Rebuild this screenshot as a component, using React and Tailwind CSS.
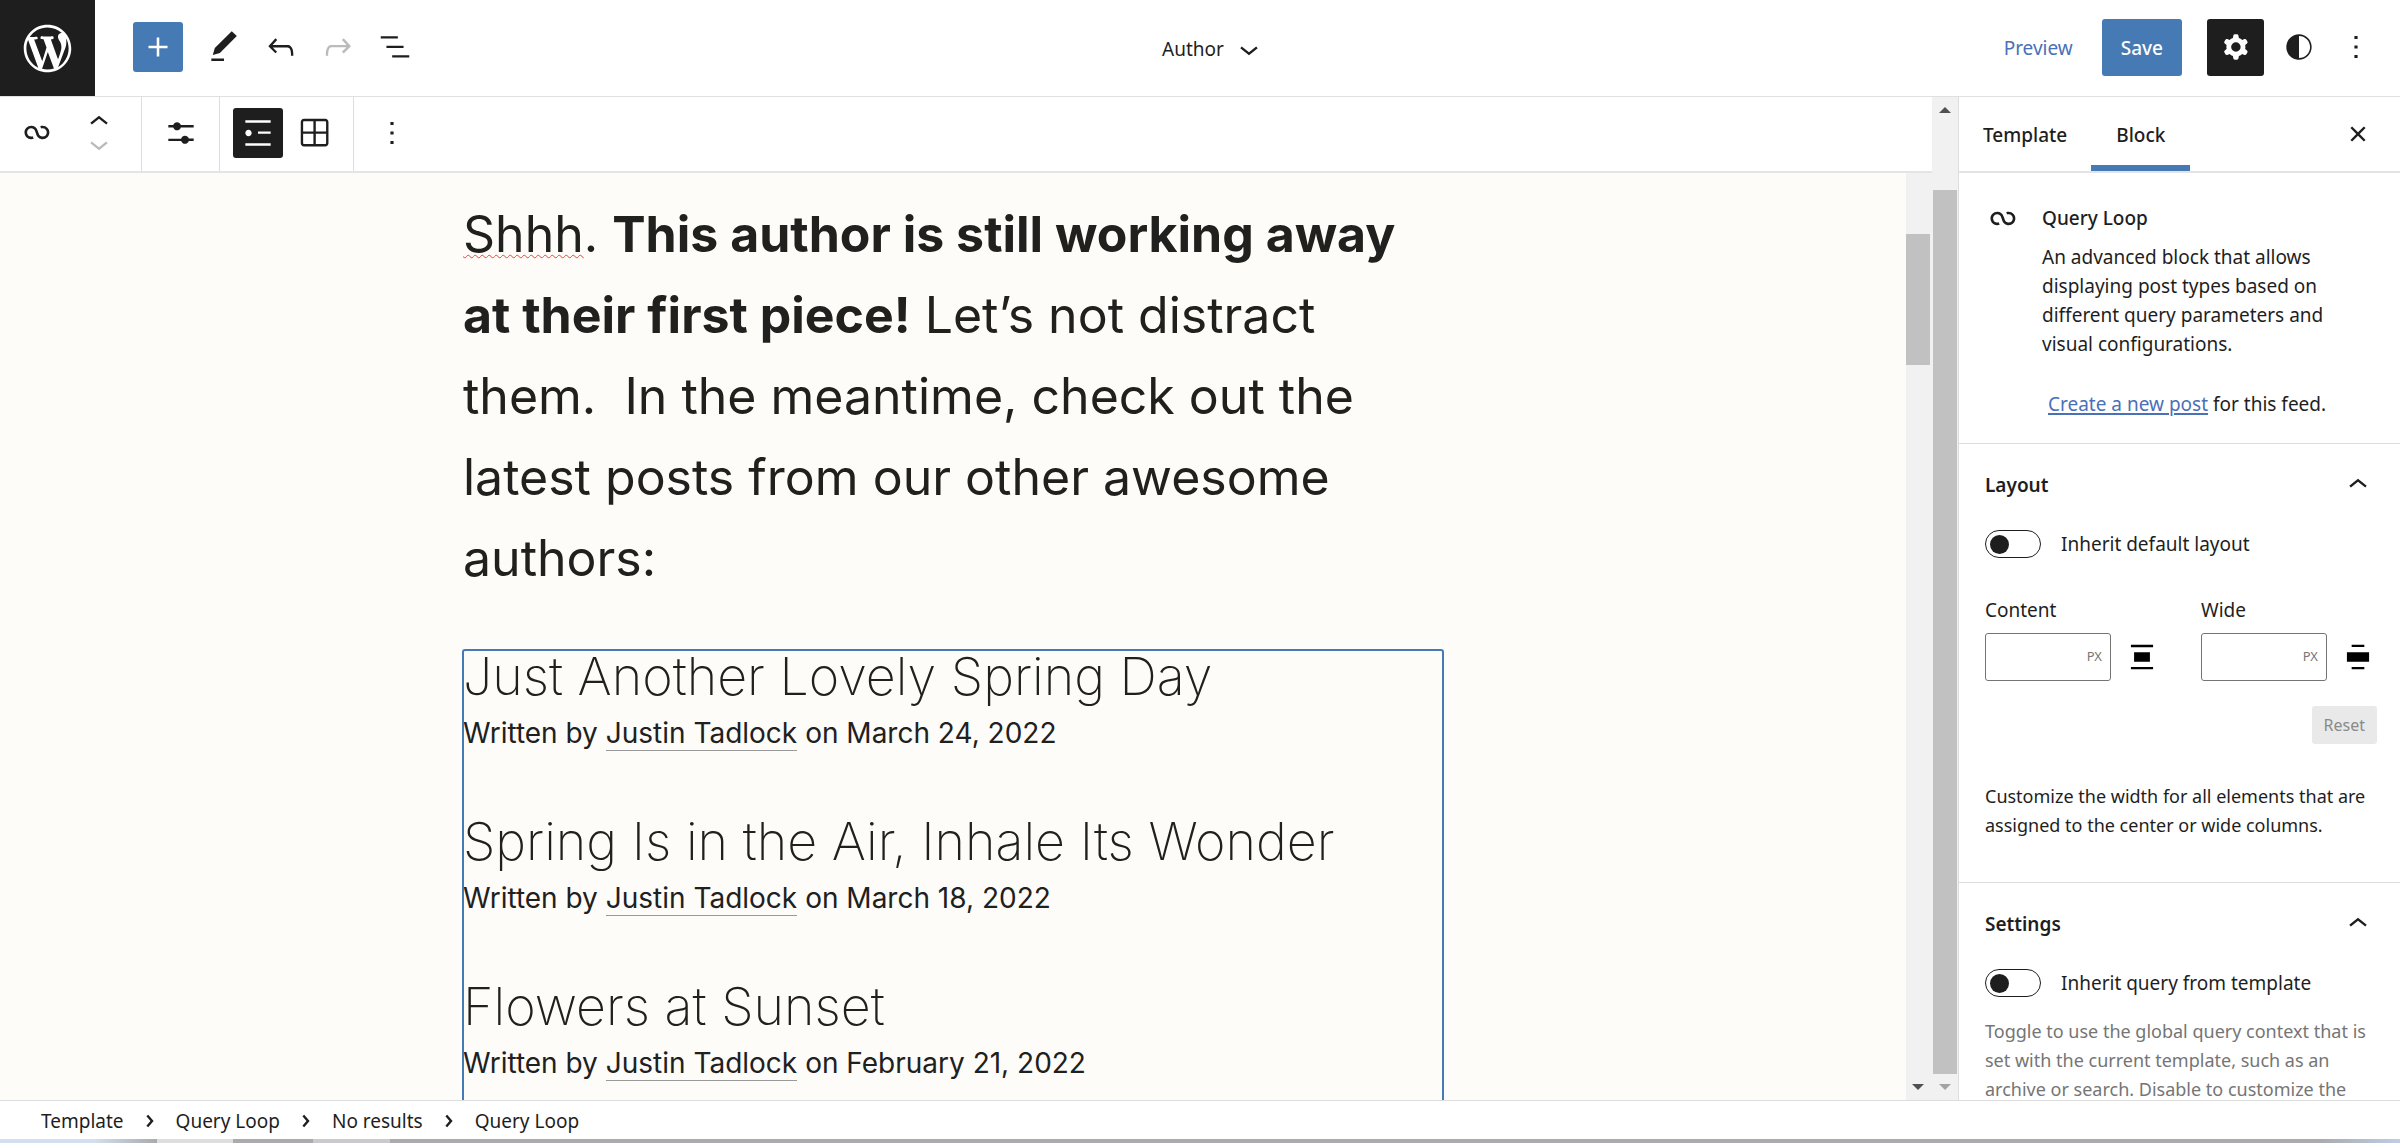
import { useState } from 'react';
import clsx from 'clsx';

const icons = {
  plus: 'M18 11.2h-5.2V6h-1.6v5.2H6v1.6h5.2V18h1.6v-5.2H18z',
  edit: 'M20.1 5.1L16.9 2 6.2 12.7l-1.3 4.4 4.5-1.3L20.1 5.1zM4 20.8h8v-1.5H4v1.5z',
  undo: 'M18.3 11.7c-.6-.6-1.4-.9-2.3-.9H6.7l2.9-3.3-1.1-1-4.5 5L8.5 16l1-1-2.7-2.7H16c.5 0 .9.2 1.3.5 1 1 1 3.4 1 4.5v.3h1.5v-.2c0-1.5 0-4.3-1.5-5.7z',
  redo: 'M15.6 6.5l-1.1 1 2.9 3.3H8c-.9 0-1.7.3-2.3.9-1.4 1.5-1.4 4.2-1.4 5.6v.2h1.5v-.3c0-1.1 0-3.5 1-4.5.3-.3.7-.5 1.3-.5h9.2L14.5 15l1.1 1.1 4.6-4.6-4.6-5z',
  listView: 'M13.8 5.2H3v1.5h10.8V5.2zm-3.6 12v1.5H21v-1.5H10.2zm7.2-6H6.6v1.5h10.8v-1.5z',
  loop: 'M18.1823 11.6392C18.1823 13.0804 17.0139 14.2487 15.5727 14.2487C14.3579 14.2487 13.335 13.4179 13.0453 12.2922L13.0377 12.2625L13.0278 12.2335L12.3985 10.377L12.3942 10.3785C11.8571 8.64997 10.246 7.39405 8.33961 7.39405C5.99509 7.39405 4.09448 9.29465 4.09448 11.6392C4.09448 13.9837 5.99509 15.8843 8.33961 15.8843C8.88499 15.8843 9.40822 15.781 9.88943 15.5923L9.29212 14.0697C8.99812 14.1848 8.67729 14.2487 8.33961 14.2487C6.89838 14.2487 5.73003 13.0804 5.73003 11.6392C5.73003 10.1979 6.89838 9.02959 8.33961 9.02959C9.55444 9.02959 10.5773 9.86046 10.867 10.9862L10.8772 10.9836L11.4695 12.7311C11.9515 14.546 13.6048 15.8843 15.5727 15.8843C17.9172 15.8843 19.8178 13.9837 19.8178 11.6392C19.8178 9.29465 17.9172 7.39404 15.5727 7.39404C15.0287 7.39404 14.5066 7.4968 14.0264 7.6847L14.6223 9.20781C14.9158 9.093 15.2358 9.02959 15.5727 9.02959C17.0139 9.02959 18.1823 10.1979 18.1823 11.6392Z',
  chevronUp: 'M6.5 12.4L12 8l5.5 4.4-.9 1.2L12 10l-4.5 3.6-1-1.2z',
  chevronDown: 'M17.5 11.6L12 16l-5.5-4.4.9-1.2L12 14l4.5-3.6 1 1.2z',
  chevronRight: 'M10.8622 8.04053L14.2805 12.0286L10.8622 16.0167L9.72327 15.0405L12.3049 12.0286L9.72327 9.01672L10.8622 8.04053Z',
  sliders: 'M14.5 13.8c-1.1 0-2.1.7-2.4 1.8H4V17h8.1c.3 1 1.3 1.8 2.4 1.8s2.1-.7 2.4-1.8H20v-1.5h-3.1c-.3-1-1.3-1.7-2.4-1.7zM11.9 7c-.3-1-1.3-1.8-2.4-1.8S7.4 6 7.1 7H4v1.5h3.1c.3 1 1.3 1.8 2.4 1.8s2.1-.7 2.4-1.8H20V7h-8.1z',
  list: 'M4 4v1.5h16V4H4zm8 8.5h8V11h-8v1.5zM4 20h16v-1.5H4V20zm4-8c0-1.1-.9-2-2-2s-2 .9-2 2 .9 2 2 2 2-.9 2-2z',
  grid: 'm3 5c0-1.10457.89543-2 2-2h13.5c1.1046 0 2 .89543 2 2v13.5c0 1.1046-.8954 2-2 2h-13.5c-1.10457 0-2-.8954-2-2zm2-.5h6v6.5h-6.5v-6c0-.27614.22386-.5.5-.5zm-.5 8v6c0 .2761.22386.5.5.5h6v-6.5zm8 0v6.5h6c.2761 0 .5-.2239.5-.5v-6zm0-8v6.5h6.5v-6c0-.27614-.2239-.5-.5-.5z',
  more: 'M13 19h-2v-2h2v2zm0-6h-2v-2h2v2zm0-6h-2V5h2v2z',
  cog: 'M10.289 4.836A1 1 0 0111.275 4h1.306a1 1 0 01.987.836l.244 1.466c.787.26 1.503.679 2.108 1.218l1.393-.522a1 1 0 011.216.437l.653 1.13a1 1 0 01-.23 1.273l-1.148.944a6.025 6.025 0 010 2.435l1.149.946a1 1 0 01.23 1.272l-.653 1.13a1 1 0 01-1.216.437l-1.394-.522c-.605.54-1.32.958-2.108 1.218l-.244 1.466a1 1 0 01-.987.836h-1.306a1 1 0 01-.986-.836l-.244-1.466a5.995 5.995 0 01-2.108-1.218l-1.394.522a1 1 0 01-1.217-.436l-.653-1.131a1 1 0 01.23-1.272l1.149-.946a6.026 6.026 0 010-2.435l-1.148-.944a1 1 0 01-.23-1.272l.653-1.131a1 1 0 011.217-.437l1.393.522a5.994 5.994 0 012.108-1.218l.244-1.466zM14.929 12a3 3 0 11-6 0 3 3 0 016 0z',
  styles: 'M12 4c-4.4 0-8 3.6-8 8v.1c0 4.1 3.2 7.5 7.2 7.9h.8c4.4 0 8-3.6 8-8s-3.6-8-8-8zm0 15V5c3.9 0 7 3.1 7 7s-3.1 7-7 7z',
  close: 'M12 13.06l3.712 3.713 1.061-1.06L13.061 12l3.712-3.712-1.06-1.06L12 10.938 8.288 7.227l-1.061 1.06L10.939 12l-3.712 3.712 1.06 1.061L12 13.061z',
  center: 'M7 9v6h10V9H7zM5 19.8h14v-1.5H5v1.5zM5 4.3v1.5h14V4.3H5z',
  wide: 'M5 9v6h14V9H5zm11-4.8H8v1.5h8V4.2zM8 19.8h8v-1.5H8v1.5z',
};

function Icon({ name, className }) {
  return (
    <svg viewBox="0 0 24 24" fill="currentColor" fillRule="evenodd" aria-hidden="true" className={clsx('size-[38px] shrink-0', className)}>
      <path d={icons[name]} />
    </svg>
  );
}

function IconButton({ icon, label, className, ...props }) {
  return (
    <button type="button" aria-label={label} className={clsx('flex shrink-0 items-center justify-center rounded-[3px]', className)} {...props}>
      <Icon name={icon} />
    </button>
  );
}

function WordPressLogo() {
  return (
    <svg viewBox="-2 -2 24 24" fill="currentColor" aria-hidden="true" className="size-[57px]">
      <path d="M20 10c0-5.51-4.49-10-10-10C4.48 0 0 4.49 0 10c0 5.52 4.48 10 10 10 5.51 0 10-4.48 10-10zM7.78 15.37L4.37 6.22c.55-.02 1.17-.08 1.17-.08.5-.06.44-1.13-.06-1.11 0 0-1.45.11-2.37.11-.18 0-.37 0-.58-.01C4.12 2.69 6.87 1.11 10 1.11c2.33 0 4.45.87 6.05 2.34-.68-.11-1.65.39-1.65 1.58 0 .74.45 1.36.9 2.1.35.61.55 1.36.55 2.46 0 1.49-1.4 5-1.4 5l-3.03-8.37c.54-.02.82-.17.82-.17.5-.05.44-1.25-.06-1.22 0 0-1.44.12-2.38.12-.87 0-2.33-.12-2.33-.12-.5-.03-.56 1.2-.06 1.22l.92.08 1.26 3.41zM17.41 10c.24-.64.74-1.87.43-4.25.7 1.29 1.05 2.71 1.05 4.25 0 3.29-1.73 6.24-4.4 7.78.97-2.59 1.94-5.2 2.92-7.78zM6.1 18.09C3.12 16.65 1.11 13.53 1.11 10c0-1.3.23-2.48.72-3.59C3.25 10.3 4.67 14.2 6.1 18.09zm4.03-6.63l2.58 6.98c-.86.29-1.76.45-2.71.45-.79 0-1.57-.11-2.29-.33.81-2.38 1.62-4.74 2.42-7.1z" />
    </svg>
  );
}

function Header() {
  return (
    <header className="flex h-[97px] shrink-0 items-stretch border-b border-[#e0e0e0]">
      <div className="flex flex-1">
        <a href="#dashboard" aria-label="WordPress" className="flex w-[95px] items-center justify-center bg-[#1e1e1e] text-white">
          <WordPressLogo />
        </a>
        <div className="flex items-center pb-0.5 pl-[38px]">
          <IconButton icon="plus" label="Toggle block inserter" className="mr-4 size-[50px] bg-[#467ab5] text-white" />
          <div className="flex gap-[7px]">
            <IconButton icon="edit" label="Tools" className="size-[50px]" />
            <IconButton icon="undo" label="Undo" className="size-[50px]" />
            <IconButton icon="redo" label="Redo" className="size-[50px] text-[#bbb]" disabled />
            <IconButton icon="listView" label="List View" className="size-[50px]" />
          </div>
        </div>
      </div>

      <button type="button" className="ml-[46px] flex items-center gap-1.5 pt-0.5">
        Author
        <Icon name="chevronDown" />
      </button>

      <div className="flex flex-1 items-center justify-end pb-0.5 pr-4">
        <button type="button" className="px-[18px] pt-0.5 text-[#4a70b8]">Preview</button>
        <button type="button" className="ml-[11px] mr-[25px] h-[57px] rounded-[3px] bg-[#467ab5] px-[19px] pt-0.5 font-medium text-white">Save</button>
        <IconButton icon="cog" label="Settings" className="mr-1.5 size-[57px] bg-[#1e1e1e] text-white" />
        <IconButton icon="styles" label="Styles" className="size-[57px]" />
        <IconButton icon="more" label="Options" className="size-[57px]" />
      </div>
    </header>
  );
}

function BlockToolbar() {
  return (
    <div role="toolbar" aria-label="Block tools" className="flex h-[76px] shrink-0 border-b-2 border-[#e4e4e4] bg-white">
      <div className="flex w-[142px] items-center border-r border-[#ddd] pb-0.5 pl-[18px]">
        <IconButton icon="loop" label="Query Loop" className="size-[38px]" />
        <div className="ml-6 flex flex-col">
          <button type="button" aria-label="Move up" className="flex h-[22px] items-center">
            <Icon name="chevronUp" />
          </button>
          <button type="button" aria-label="Move down" className="flex h-[22px] items-center text-[#bbb]" disabled>
            <Icon name="chevronDown" />
          </button>
        </div>
      </div>
      <div className="flex w-[78px] items-center justify-center border-r border-[#ddd] pb-0.5">
        <IconButton icon="sliders" label="Display settings" className="size-[50px]" />
      </div>
      <div className="flex w-[134px] items-center gap-[7px] border-r border-[#ddd] pb-0.5 pl-[13px]">
        <IconButton icon="list" label="List view" className="size-[50px] bg-[#1e1e1e] text-white" />
        <IconButton icon="grid" label="Grid view" className="size-[50px]" />
      </div>
      <div className="flex items-center pb-0.5 pl-[13px]">
        <IconButton icon="more" label="Options" className="size-[50px]" />
      </div>
    </div>
  );
}

function Arrow({ up, className }) {
  return (
    <svg viewBox="0 0 12 6" fill="currentColor" aria-hidden="true" className={clsx('h-[6px] w-[12px]', className)}>
      <path d={up ? 'M6 0l6 6H0z' : 'M0 0h12L6 6z'} />
    </svg>
  );
}

const posts = [
  { title: 'Just Another Lovely Spring Day', date: 'March 24, 2022' },
  { title: 'Spring Is in the Air, Inhale Its Wonder', date: 'March 18, 2022' },
  { title: 'Flowers at Sunset', date: 'February 21, 2022' },
];

function Canvas() {
  return (
    <div className="min-w-0 flex-1 overflow-hidden bg-[#fdfcf8] pt-[21px] font-['Inter',sans-serif] text-[#20201e]">
      <div className="mx-auto flex h-full max-w-[980px] flex-col">
        <p className="shrink-0 text-[50px] leading-[81px]">
          <span className="underline decoration-[#e5483b] decoration-wavy decoration-1 underline-offset-2">Shhh</span>.{' '}
          <strong className="font-bold">This author is still working away<br />at their first piece!</strong> Let’s not distract<br />
          them. &nbsp;In the meantime, check out the<br />
          latest posts from our other awesome<br />
          authors:
        </p>
        <ul className="mt-[51px] flex flex-1 shrink-0 flex-col gap-[59px] rounded-[2px] pb-20 outline-2 -outline-offset-1 outline-[#467ab5]">
          {posts.map(post => (
            <li key={post.title}>
              <h2 className="text-[52px] font-extralight leading-[54px]">{post.title}</h2>
              <p className="mt-[7px] text-[28px] leading-[45px]">
                Written by <a href="#author" className="border-b border-[#999]">Justin Tadlock</a> on {post.date}
              </p>
            </li>
          ))}
        </ul>
      </div>
    </div>
  );
}

function Toggle({ id, label }) {
  const [checked, setChecked] = useState(false);
  return (
    <div className="flex items-center gap-5">
      <input
        id={id}
        type="checkbox"
        checked={checked}
        onChange={e => setChecked(e.target.checked)}
        className="flex h-7 w-14 appearance-none items-center rounded-full border border-[#1e1e1e] px-1 before:size-[19px] before:rounded-full before:bg-[#1e1e1e] checked:justify-end"
      />
      <label htmlFor={id}>{label}</label>
    </div>
  );
}

function SizeField({ id, label, icon }) {
  return (
    <div className="flex flex-col gap-[9px]">
      <label htmlFor={id}>{label}</label>
      <div className="flex items-center gap-3">
        <div className="flex h-12 w-[126px] items-center rounded-[3px] border border-[#757575] pr-2">
          <input id={id} type="text" className="h-full min-w-0 flex-1 pl-3 outline-none" />
          <span className="text-[13px] text-[#757575]">PX</span>
        </div>
        <Icon name={icon} className="text-black" />
      </div>
    </div>
  );
}

function Panel({ title, children }) {
  return (
    <section className="border-t border-[#ddd] pl-[26px] pr-[23px]">
      <h2 className="mb-1 font-semibold">
        <button type="button" className="flex h-[82px] w-full items-center justify-between">
          {title}
          <Icon name="chevronUp" />
        </button>
      </h2>
      {children}
    </section>
  );
}

function Sidebar() {
  return (
    <aside className="flex w-[442px] shrink-0 flex-col overflow-hidden border-l border-[#ddd]">
      <div className="flex h-[76px] shrink-0 items-stretch border-b-2 border-[#e4e4e4] pr-[23px] font-medium">
        <button type="button" className="px-6 pt-0.5">Template</button>
        <button type="button" className="border-b-[6px] border-[#467ab5] px-[25px] pt-2">Block</button>
        <IconButton icon="close" label="Close settings" className="ml-auto" />
      </div>

      <div className="flex shrink-0 gap-5 pb-6 pl-[25px] pr-10 pt-[31px]">
        <Icon name="loop" className="-mt-1" />
        <div>
          <h2 className="mb-2.5 font-medium leading-[29px]">Query Loop</h2>
          <p className="leading-[29px]">
            An advanced block that allows<br />displaying post types based on<br />different query parameters and<br />visual configurations.
          </p>
          <p className="mt-[31px] whitespace-nowrap pl-1.5 leading-[29px]">
            <a href="#new" className="text-[#4a70b8] underline decoration-2 underline-offset-2">Create a new post</a> for this feed.
          </p>
        </div>
      </div>

      <Panel title="Layout">
        <Toggle id="inherit-layout" label="Inherit default layout" />
        <div className="mt-[37px] flex justify-between">
          <SizeField id="content-size" label="Content" icon="center" />
          <SizeField id="wide-size" label="Wide" icon="wide" />
        </div>
        <div className="mt-[25px] flex justify-end">
          <button type="button" className="h-[38px] rounded-[3px] bg-[#e9e9e9] px-3 text-[16px] text-[#8a8a8a]" disabled>Reset</button>
        </div>
        <p className="mb-[42px] mt-[38px] text-[18px] leading-[29px]">Customize the width for all elements that are assigned to the center or wide columns.</p>
      </Panel>

      <Panel title="Settings">
        <Toggle id="inherit-query" label="Inherit query from template" />
        <p className="mt-[19px] text-[18px] leading-[29px] text-[#757575]">
          Toggle to use the global query context that is set with the current template, such as an archive or search. Disable to customize the
        </p>
      </Panel>
    </aside>
  );
}

const crumbs = ['Template', 'Query Loop', 'No results', 'Query Loop'];

export default function App() {
  return (
    <div className="flex h-screen flex-col bg-white font-['Noto_Sans',sans-serif] text-[19px] text-[#1e1e1e]">
      <Header />

      <div className="flex min-h-0 flex-1">
        <main className="flex min-w-0 flex-1 flex-col">
          <BlockToolbar />
          <div className="flex min-h-0 flex-1">
            <Canvas />
            <div className="flex w-[26px] flex-col bg-[#f1f1f1] pb-[10px] pt-[61px] text-[#505050]">
              <div className="h-[131px] w-6 bg-[#c1c1c1]" />
              <Arrow className="ml-[6px] mt-auto" />
            </div>
          </div>
        </main>

        <div className="flex w-[26px] shrink-0 flex-col items-center bg-[#f1f1f1] pb-[10px] pt-[10px]">
          <Arrow up className="text-[#505050]" />
          <div className="mb-[10px] mt-[77px] w-6 flex-1 bg-[#c1c1c1]" />
          <Arrow className="text-[#a3a3a3]" />
        </div>

        <Sidebar />
      </div>

      <footer className="shrink-0 border-t border-[#ddd]">
        <nav aria-label="Block breadcrumb">
          <ol className="flex h-[38px] items-center pl-[41px] pt-0.5">
            {crumbs.map((crumb, i) => (
              <li key={i} className="flex items-center">
                {i > 0 && <Icon name="chevronRight" className="mx-[7px]" />}
                <a href="#block">{crumb}</a>
              </li>
            ))}
          </ol>
        </nav>
        {/* strip of the desktop behind the window */}
        <div className="flex h-1 bg-[#a9abae]">
          <div className="w-[157px] bg-linear-to-r from-[#d3deee] from-60% to-[#a9abae]" />
          <div className="w-[76px] bg-[#dedede]" />
          <div className="w-[80px]" />
          <div className="w-[77px] bg-[#c9cacd]" />
          <div className="ml-auto w-[80px] bg-linear-to-r from-[#a9abae] to-[#c0cde6]" />
        </div>
      </footer>
    </div>
  );
}
